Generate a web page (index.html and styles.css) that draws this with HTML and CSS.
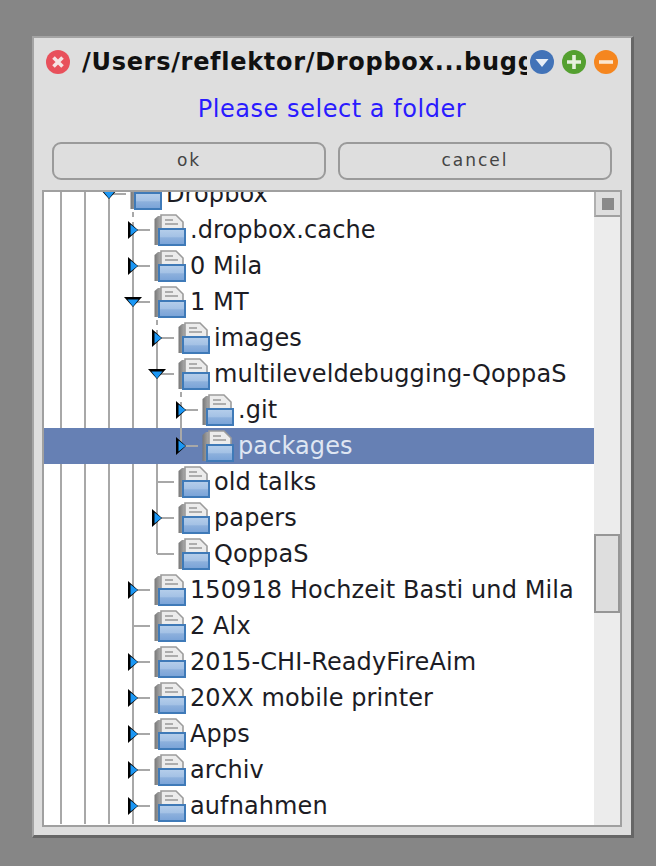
FILE: index.html
```html
<!DOCTYPE html>
<html>
<head>
<meta charset="utf-8">
<title>Please select a folder</title>
<link rel="stylesheet" href="styles.css">
</head>
<body>
<svg class="defs" width="0" height="0">
  <defs>
    <linearGradient id="front" x1="0" y1="0" x2="0" y2="1">
      <stop offset="0" stop-color="#b4cdea"/>
      <stop offset="0.5" stop-color="#a3c1e5"/>
      <stop offset="0.55" stop-color="#8db0dc"/>
      <stop offset="1" stop-color="#7ba4d8"/>
    </linearGradient>
    <linearGradient id="back" x1="0" y1="0" x2="1" y2="0">
      <stop offset="0" stop-color="#777"/>
      <stop offset="1" stop-color="#c4c4c4"/>
    </linearGradient>
    <symbol id="folder" viewBox="0 0 32 32">
      <path d="M0.5 5 L4 2 H10 V31 H0.5 Z" fill="url(#back)"/>
      <path d="M7 1 H22 L29 8 V16 H7 Z" fill="#ececec" stroke="#9c9c9c" stroke-width="1.6"/>
      <path d="M11 6 H19 M11 10 H24" stroke="#adadad" stroke-width="1.8"/>
      <rect x="4" y="14" width="28" height="18" fill="#3f7ab8"/>
      <rect x="6" y="16" width="24" height="14" fill="url(#front)"/>
    </symbol>
    <symbol id="right" viewBox="0 0 10 18">
      <path d="M0 0 L10 9 L0 18 Z" fill="#000"/>
      <path d="M2.5 3.5 L9.5 9 L2.5 14.5 Z" fill="#1b97f5"/>
    </symbol>
    <symbol id="down" viewBox="0 0 18 10">
      <path d="M0 0 H18 L9 10 Z" fill="#000"/>
      <path d="M3.5 2.5 H14.5 L9 9.5 Z" fill="#1b97f5"/>
    </symbol>
  </defs>
</svg>
<main class="window">
  <header class="titlebar">
    <svg class="wicon" viewBox="0 0 24 24"><circle cx="12" cy="12" r="12" fill="#e8505b"/><path d="M7.5 7.5 L16.5 16.5 M16.5 7.5 L7.5 16.5" stroke="#f6e4e4" stroke-width="3.6"/></svg>
    <div class="title">/Users/reflektor/Dropbox...bugging-QoppaS/packages</div>
    <div class="wbtns">
      <svg class="wicon" viewBox="0 0 24 24"><circle cx="12" cy="12" r="12" fill="#4273b8"/><path d="M5.5 9 H18.5 L12 17 Z" fill="#e8eef6"/></svg>
      <svg class="wicon" viewBox="0 0 24 24"><circle cx="12" cy="12" r="12" fill="#54a030"/><path d="M12 5 V19 M5 12 H19" stroke="#e6f0de" stroke-width="3.6"/></svg>
      <svg class="wicon" viewBox="0 0 24 24"><circle cx="12" cy="12" r="12" fill="#f5861f"/><path d="M5 12 H19" stroke="#fbe6d0" stroke-width="3.6"/></svg>
    </div>
  </header>
  <p class="prompt">Please select a folder</p>
  <div class="actions">
    <button class="btn">ok</button>
    <button class="btn">cancel</button>
  </div>
  <section class="tree">
    <div class="rows">
      <div class="row"><i class="g"></i><i class="g"></i><span class="c"><svg class="down"><use href="#down"/></svg></span><svg class="fi"><use href="#folder"/></svg><span class="t">Dropbox</span></div>
      <div class="row"><i class="g"></i><i class="g"></i><i class="g"></i><span class="c first"><svg class="right"><use href="#right"/></svg></span><svg class="fi"><use href="#folder"/></svg><span class="t">.dropbox.cache</span></div>
      <div class="row"><i class="g"></i><i class="g"></i><i class="g"></i><span class="c"><svg class="right"><use href="#right"/></svg></span><svg class="fi"><use href="#folder"/></svg><span class="t">0 Mila</span></div>
      <div class="row"><i class="g"></i><i class="g"></i><i class="g"></i><span class="c"><svg class="down"><use href="#down"/></svg></span><svg class="fi"><use href="#folder"/></svg><span class="t">1 MT</span></div>
      <div class="row"><i class="g"></i><i class="g"></i><i class="g"></i><i class="g"></i><span class="c first"><svg class="right"><use href="#right"/></svg></span><svg class="fi"><use href="#folder"/></svg><span class="t">images</span></div>
      <div class="row"><i class="g"></i><i class="g"></i><i class="g"></i><i class="g"></i><span class="c"><svg class="down"><use href="#down"/></svg></span><svg class="fi"><use href="#folder"/></svg><span class="t">multileveldebugging-QoppaS</span></div>
      <div class="row"><i class="g"></i><i class="g"></i><i class="g"></i><i class="g"></i><i class="g"></i><span class="c first"><svg class="right"><use href="#right"/></svg></span><svg class="fi"><use href="#folder"/></svg><span class="t">.git</span></div>
      <div class="row sel"><i class="g"></i><i class="g"></i><i class="g"></i><i class="g"></i><i class="g"></i><span class="c last"><svg class="right"><use href="#right"/></svg></span><svg class="fi"><use href="#folder"/></svg><span class="t">packages</span></div>
      <div class="row"><i class="g"></i><i class="g"></i><i class="g"></i><i class="g"></i><span class="c"></span><svg class="fi"><use href="#folder"/></svg><span class="t">old talks</span></div>
      <div class="row"><i class="g"></i><i class="g"></i><i class="g"></i><i class="g"></i><span class="c"><svg class="right"><use href="#right"/></svg></span><svg class="fi"><use href="#folder"/></svg><span class="t">papers</span></div>
      <div class="row"><i class="g"></i><i class="g"></i><i class="g"></i><i class="g"></i><span class="c last"></span><svg class="fi"><use href="#folder"/></svg><span class="t">QoppaS</span></div>
      <div class="row"><i class="g"></i><i class="g"></i><i class="g"></i><span class="c"><svg class="right"><use href="#right"/></svg></span><svg class="fi"><use href="#folder"/></svg><span class="t">150918 Hochzeit Basti und Mila</span></div>
      <div class="row"><i class="g"></i><i class="g"></i><i class="g"></i><span class="c"></span><svg class="fi"><use href="#folder"/></svg><span class="t">2 Alx</span></div>
      <div class="row"><i class="g"></i><i class="g"></i><i class="g"></i><span class="c"><svg class="right"><use href="#right"/></svg></span><svg class="fi"><use href="#folder"/></svg><span class="t">2015-CHI-ReadyFireAim</span></div>
      <div class="row"><i class="g"></i><i class="g"></i><i class="g"></i><span class="c"><svg class="right"><use href="#right"/></svg></span><svg class="fi"><use href="#folder"/></svg><span class="t">20XX mobile printer</span></div>
      <div class="row"><i class="g"></i><i class="g"></i><i class="g"></i><span class="c"><svg class="right"><use href="#right"/></svg></span><svg class="fi"><use href="#folder"/></svg><span class="t">Apps</span></div>
      <div class="row"><i class="g"></i><i class="g"></i><i class="g"></i><span class="c"><svg class="right"><use href="#right"/></svg></span><svg class="fi"><use href="#folder"/></svg><span class="t">archiv</span></div>
      <div class="row"><i class="g"></i><i class="g"></i><i class="g"></i><span class="c"><svg class="right"><use href="#right"/></svg></span><svg class="fi"><use href="#folder"/></svg><span class="t">aufnahmen</span></div>
    </div>
    <div class="scrollbar">
      <div class="sbtn"><span class="sq"></span></div>
      <div class="track"><div class="thumb"></div></div>
    </div>
  </section>
</main>
</body>
</html>
```
FILE: styles.css
```css
* { box-sizing: border-box; }
html, body { margin: 0; height: 100%; }
body { background: #868686; overflow: hidden; font-family: "DejaVu Sans", sans-serif; padding: 36px 0 0 32px; }
.defs { display: block; height: 0; }
.window { width: 602px; height: 802px; background: #dedede; border: solid; border-width: 2px 3px 3px 2px; border-color: #a4a4a4 #666 #666 #a4a4a4; display: flex; flex-direction: column; padding: 0 9px 0 8px; }
.titlebar { display: flex; align-items: center; height: 48px; margin-left: 4px; flex: none; }
.wicon { width: 24px; height: 24px; flex: none; display: block; }
.title { flex: none; width: 445px; margin-left: 12px; overflow: hidden; white-space: nowrap; font-size: 24px; font-weight: 700; color: #111; letter-spacing: 0.7px; }
.wbtns { display: flex; gap: 8px; margin-left: 3px; }
.prompt { margin: 0; height: 44px; flex: none; text-align: center; font-size: 24px; color: #2a1bff; line-height: 46px; letter-spacing: 0.55px; }
.actions { display: flex; gap: 12px; height: 38px; margin-top: 12px; margin-left: 10px; flex: none; }
.btn { width: 274px; height: 38px; border: 2px solid #9a9a9a; border-radius: 9px; background: #dedede; font: 17px "DejaVu Sans", sans-serif; letter-spacing: 2px; color: #444; padding: 0 0 2px; }
.tree { flex: none; margin-top: 10px; height: 637px; width: 580px; border: 2px solid #a0a0a0; background: #fff; display: flex; overflow: hidden; }
.rows { width: 550px; flex: none; margin-top: -16px; }
.row { display: flex; align-items: center; height: 36px; margin-left: -1px; }
.g { flex: none; width: 24px; height: 36px; position: relative; }
.g::before { content: ""; position: absolute; left: 17px; top: 0; bottom: 0; width: 2px; background: #a8a8a8; }
.c { flex: none; width: 36px; height: 36px; position: relative; }
.c::before { content: ""; position: absolute; left: 17px; top: 0; bottom: 0; width: 2px; background: #a8a8a8; }
.c::after { content: ""; position: absolute; left: 18px; width: 17px; top: 17px; height: 2px; background: #a8a8a8; }
.c.last::before { bottom: 18px; }
.c.first::before { background: linear-gradient(#a8a8a8 0 5px, transparent 5px 10px, #a8a8a8 10px); }
.right { position: absolute; left: 13px; top: 9px; width: 10px; height: 18px; z-index: 1; }
.down { position: absolute; left: 9px; top: 13px; width: 18px; height: 10px; z-index: 1; }
.fi { flex: none; width: 32px; height: 32px; margin-left: 3px; }
.t { margin-left: 4px; font-size: 24px; color: #1c1c24; white-space: nowrap; letter-spacing: 0.1px; }
.sel { background: #6680b4; }
.sel .g::before { display: none; }
.sel .t { color: #dfe6f2; }
.scrollbar { flex: 1; display: flex; flex-direction: column; background: #ececec; }
.sbtn { height: 25px; flex: none; background: #dedede; border-left: 2px solid #b0b0b0; border-bottom: 2px solid #a0a0a0; display: flex; align-items: center; justify-content: center; }
.sq { width: 12px; height: 12px; background: #8a8a8a; }
.track { flex: 1; padding-top: 317px; }
.thumb { height: 79px; background: #dedede; border: 2px solid #969696; }
```
